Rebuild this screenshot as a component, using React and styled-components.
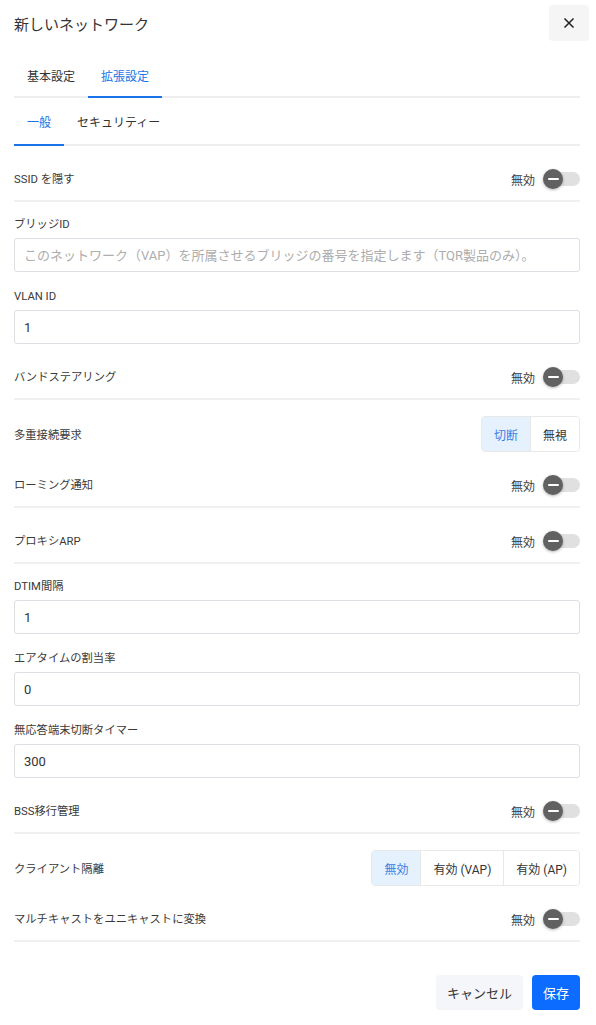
import styled, { createGlobalStyle } from "styled-components"

const GlobalStyle = createGlobalStyle`
    body {
        margin: 0;
        background: #fff;
        font-family: Roboto, "Noto Sans CJK JP", sans-serif;
        color: #333;
    }
    * { box-sizing: border-box; }
`;

const Dialog = styled.div`
    width: 596px;
    padding: 0 16px 0 14px;
`;

const Header = styled.div`
    display: flex;
    justify-content: space-between;
    align-items: center;
    padding-top: 5px;
    height: 41px;
`;

const Title = styled.h2`
    margin: 0;
    font-size: 15px;
    font-weight: 400;
    color: #333;
`;

const CloseButton = styled.button`
    width: 40px;
    height: 36px;
    margin-right: -9px;
    border: none;
    border-radius: 4px;
    background: #f5f5f5;
    display: flex;
    align-items: center;
    justify-content: center;
    padding: 0;
`;

const TabBar = styled.div`
    display: flex;
    border-bottom: 2px solid #eeeeee;
    margin-top: ${p => p.$top || 0}px;
`;

const Tab = styled.div`
    height: ${p => p.$height}px;
    padding: 0 13px;
    margin-bottom: -2px;
    display: flex;
    align-items: center;
    font-size: 12px;
    color: ${p => (p.$active ? "#1a73e8" : "#333")};
    border-bottom: 2px solid ${p => (p.$active ? "#1a73e8" : "transparent")};
`;

const Row = styled.div`
    display: flex;
    justify-content: space-between;
    align-items: center;
    padding: ${p => (p.$segmented ? "16px 0 0" : "22px 0 12px")};
    height: ${p => (p.$segmented ? 52 : 56)}px;
    border-bottom: ${p => (p.$segmented ? "none" : "2px solid #f0f0f0")};
`;

const RowLabel = styled.span`
    font-size: 11.3px;
    color: #3a3a3a;
`;

const SwitchWrap = styled.div`
    display: flex;
    align-items: center;
    gap: 9px;
    font-size: 12px;
    color: #3a3a3a;
    padding-top: 2px;
`;

const Track = styled.div`
    position: relative;
    width: 36px;
    height: 14px;
    border-radius: 7px;
    background: #e0e0e0;
`;

const Knob = styled.div`
    position: absolute;
    left: -1px;
    top: -3px;
    width: 20px;
    height: 20px;
    border-radius: 50%;
    background: #616161;
    box-shadow: 0 1px 3px rgba(0, 0, 0, 0.3);
    display: flex;
    align-items: center;
    justify-content: center;

    &::after {
        content: "";
        width: 11px;
        height: 2px;
        background: #fff;
        border-radius: 1px;
    }
`;

const Field = styled.div`
    padding-top: ${p => p.$top || 18}px;
`;

const FieldLabel = styled.div`
    font-size: 11.3px;
    line-height: 14px;
    color: #3a3a3a;
    margin-bottom: 6px;
`;

const Input = styled.input`
    width: 100%;
    height: 34px;
    border: 1px solid #dcdfe3;
    border-radius: 3px;
    padding: 0 9px;
    font-family: Roboto, "Noto Sans CJK JP", sans-serif;
    font-size: 13px;
    color: #333;
    outline: none;

    &::placeholder {
        color: #adadad;
    }
`;

const Segmented = styled.div`
    display: flex;
    height: 36px;
    border: 1px solid #e8e8e8;
    border-radius: 4px;
    overflow: hidden;
`;

const SegButton = styled.div`
    display: flex;
    align-items: center;
    justify-content: center;
    padding: 0 12px;
    font-size: 12px;
    color: ${p => (p.$active ? "#3b7de6" : "#333")};
    background: ${p => (p.$active ? "#e5f1fc" : "#fff")};
    & + & {
        border-left: 1px solid #e8e8e8;
    }
`;

const Footer = styled.div`
    display: flex;
    justify-content: flex-end;
    gap: 9px;
    padding: 33px 0 15px;
`;

const Button = styled.button`
    height: 35px;
    padding: 0 11px;
    border: none;
    border-radius: 4px;
    font-family: Roboto, "Noto Sans CJK JP", sans-serif;
    font-size: 13px;
    background: ${p => (p.$primary ? "#0b6cff" : "#f5f6fa")};
    color: ${p => (p.$primary ? "#fff" : "#333")};
`;

const Toggle = () => (
    <SwitchWrap>
        無効
        <Track>
            <Knob />
        </Track>
    </SwitchWrap>
);

const ToggleRow = ({ label }) => (
    <Row>
        <RowLabel>{label}</RowLabel>
        <Toggle />
    </Row>
);

const App = () => {
    return (
        <Dialog>
            <GlobalStyle />
            <Header>
                <Title>新しいネットワーク</Title>
                <CloseButton>
                    <svg width="12" height="12" viewBox="0 0 12 12">
                        <path d="M1.5 1.5 L10.5 10.5 M10.5 1.5 L1.5 10.5" stroke="#222" strokeWidth="1.5" />
                    </svg>
                </CloseButton>
            </Header>
            <TabBar $top={13}>
                <Tab $height={44}>基本設定</Tab>
                <Tab $height={44} $active>拡張設定</Tab>
            </TabBar>
            <TabBar>
                <Tab $height={48} $active>一般</Tab>
                <Tab $height={48}>セキュリティー</Tab>
            </TabBar>

            <ToggleRow label="SSID を隠す" />
            <Field $top={16}>
                <FieldLabel>ブリッジID</FieldLabel>
                <Input placeholder="このネットワーク（VAP）を所属させるブリッジの番号を指定します（TQR製品のみ）。" />
            </Field>
            <Field>
                <FieldLabel>VLAN ID</FieldLabel>
                <Input defaultValue="1" />
            </Field>
            <ToggleRow label="バンドステアリング" />
            <Row $segmented>
                <RowLabel>多重接続要求</RowLabel>
                <Segmented>
                    <SegButton $active>切断</SegButton>
                    <SegButton>無視</SegButton>
                </Segmented>
            </Row>
            <ToggleRow label="ローミング通知" />
            <ToggleRow label="プロキシARP" />
            <Field $top={16}>
                <FieldLabel>DTIM間隔</FieldLabel>
                <Input defaultValue="1" />
            </Field>
            <Field>
                <FieldLabel>エアタイムの割当率</FieldLabel>
                <Input defaultValue="0" />
            </Field>
            <Field>
                <FieldLabel>無応答端末切断タイマー</FieldLabel>
                <Input defaultValue="300" />
            </Field>
            <ToggleRow label="BSS移行管理" />
            <Row $segmented>
                <RowLabel>クライアント隔離</RowLabel>
                <Segmented>
                    <SegButton $active>無効</SegButton>
                    <SegButton>有効 (VAP)</SegButton>
                    <SegButton>有効 (AP)</SegButton>
                </Segmented>
            </Row>
            <ToggleRow label="マルチキャストをユニキャストに変換" />

            <Footer>
                <Button>キャンセル</Button>
                <Button $primary>保存</Button>
            </Footer>
        </Dialog>
    )
}

export default App
